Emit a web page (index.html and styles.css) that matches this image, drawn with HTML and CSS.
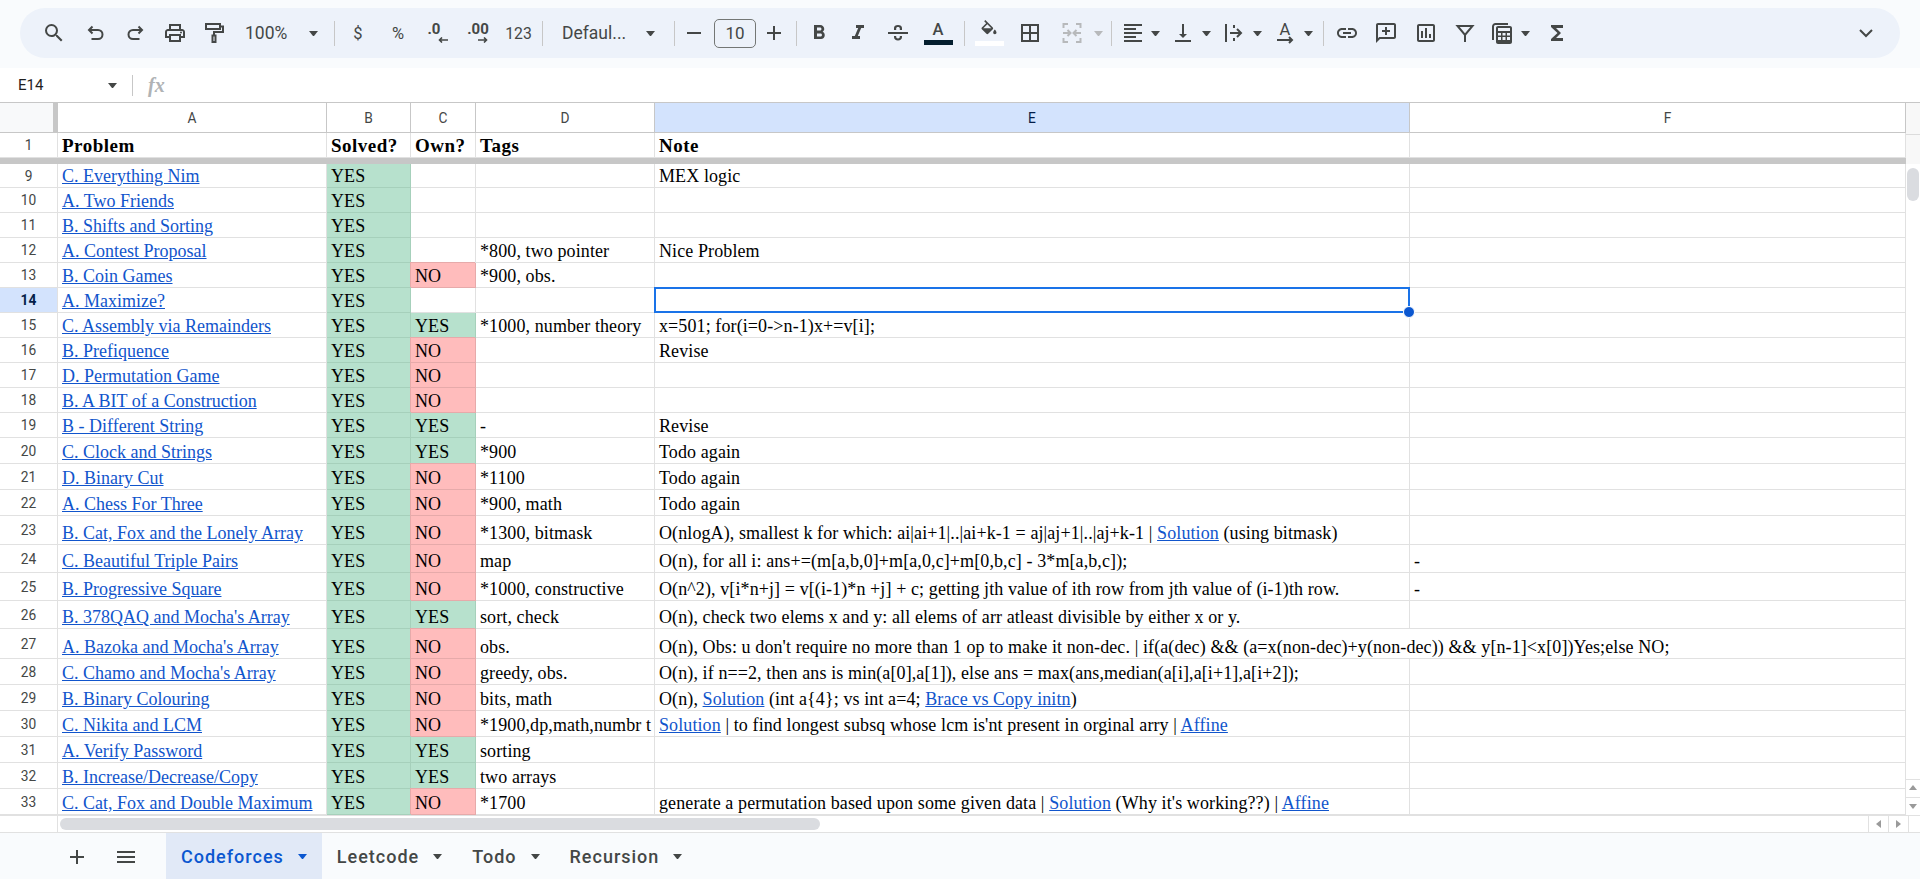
FILE: index.html
```html
<!DOCTYPE html>
<html lang="en">
<head>
  <meta charset="UTF-8" />
  <meta name="viewport" content="width=device-width, initial-scale=1.0" />
  <title>Codeforces - Sheets</title>
  <link rel="stylesheet" href="styles.css">
</head>
<body>
  <div class="toolbar">
    <div class="pill">
      <span class="tb w40"><svg viewBox="0 0 24 24"><path d="M15.5 14h-.79l-.28-.27A6.47 6.47 0 0 0 16 9.5 6.5 6.5 0 1 0 9.5 16c1.61 0 3.09-.59 4.23-1.57l.27.28v.79l5 4.99L20.49 19l-4.99-5zm-6 0C7.01 14 5 11.99 5 9.5S7.01 5 9.5 5 14 7.01 14 9.5 11.99 14 9.5 14z"/></svg></span>
      <span class="tb w40 ml2"><svg viewBox="0 0 24 24" class="line"><path d="M8.5 5.5L5 9l3.5 3.5M5.5 9h8.5a4.5 4.5 0 0 1 0 9H7.500"/></svg></span>
      <span class="tb w38"><svg viewBox="0 0 24 24" class="line"><path d="M15.5 5.5L19 9l-3.5 3.5M18.5 9H10a4.5 4.5 0 0 0 0 9h6.500"/></svg></span>
      <span class="tb w42"><svg viewBox="0 0 24 24"><path d="M19 8h-1V3H6v5H5c-1.66 0-3 1.34-3 3v6h4v4h12v-4h4v-6c0-1.66-1.34-3-3-3zM8 5h8v3H8V5zm8 12v2H8v-4h8v2zm2-2v-2H6v2H4v-4c0-.55.45-1 1-1h14c.55 0 1 .45 1 1v4h-2z"/><circle cx="18" cy="11.5" r="1"/></svg></span>
      <span class="tb w36"><svg viewBox="0 0 24 24" class="line"><path d="M4 3h14v5H4zM18 5.500h3v5.500h-9v3"/><path d="M10.500 14.500h3V21h-3z"/></svg></span>
      <span class="zoom">100%<i class="tri"></i></span>
      <b class="sep"></b>
      <span class="tb w40 sym">$</span>
      <span class="tb w40 sym">%</span>
      <span class="tb w40 deci"><em class="one">.0</em><svg viewBox="0 0 10 6" class="line tiny"><path d="M10 3H1.500M4 .5L1.500 3 4 5.500"/></svg></span>
      <span class="tb w40 deci"><em>.00</em><svg viewBox="0 0 10 6" class="line tiny"><path d="M0 3h8.500M6 .5L8.500 3 6 5.500"/></svg></span>
      <span class="tb w41 num">123</span>
      <b class="sep"></b>
      <span class="font">Defaul...<i class="tri"></i></span>
      <b class="sep"></b>
      <span class="tb w32"><svg viewBox="0 0 24 24"><path d="M5 11h14v2H5z"/></svg></span>
      <span class="size">10</span>
      <span class="tb w36 mr1"><svg viewBox="0 0 24 24"><path d="M19 13h-6v6h-2v-6H5v-2h6V5h2v6h6z"/></svg></span>
      <b class="sep"></b>
      <span class="tb w38"><svg viewBox="0 0 24 24"><path d="M15.6 10.79c.97-.67 1.65-1.77 1.65-2.79 0-2.26-1.75-4-4-4H7v14h7.04c2.09 0 3.71-1.7 3.71-3.79 0-1.52-.86-2.82-2.15-3.42zM10 6.5h3c.83 0 1.5.67 1.5 1.5s-.67 1.5-1.5 1.5h-3v-3zm3.5 9H10v-3h3.5c.83 0 1.5.67 1.5 1.5s-.67 1.5-1.5 1.5z"/></svg></span>
      <span class="tb w40"><svg viewBox="0 0 24 24"><path d="M10 4v3h2.21l-3.42 8H6v3h8v-3h-2.21l3.42-8H18V4z"/></svg></span>
      <span class="tb w40"><svg viewBox="0 0 24 24"><path d="M2 11h20v2H2zM12 4c-2.5 0-4 1.3-4 3v2h2.2V7.4c0-.8.7-1.4 1.8-1.4s1.8.6 1.8 1.4V9H16V7c0-1.7-1.5-3-4-3zM8 15v1c0 2 1.6 3.5 4 3.5s4-1.5 4-3.5v-1h-2.2v.8c0 .9-.7 1.6-1.8 1.6s-1.8-.7-1.8-1.6V15z"/></svg></span>
      <span class="tb w40 swatch"><em>A</em><u class="dark"></u></span>
      <span class="mr3"></span>
      <b class="sep"></b>
      <span class="tb w42 swatch"><svg viewBox="0 0 24 24" class="fill"><path fill-rule="evenodd" d="M16.56 8.94L7.62 0 6.21 1.41l2.38 2.38-5.15 5.15c-.59.59-.59 1.54 0 2.12l5.5 5.5c.29.29.68.44 1.06.44s.77-.15 1.06-.44l5.5-5.5c.59-.58.59-1.53 0-2.12zM5.21 10L10 5.21 14.79 10H5.21zM19 11.5s-2 2.17-2 3.5c0 1.1.9 2 2 2s2-.9 2-2c0-1.33-2-3.5-2-3.5z"/></svg><u class="light"></u></span>
      <span class="tb w40"><svg viewBox="0 0 24 24"><path d="M3 3v18h18V3H3zm8 16H5v-6h6v6zm0-8H5V5h6v6zm8 8h-6v-6h6v6zm0-8h-6V5h6v6z"/></svg></span>
      <span class="tb w44 off"><svg viewBox="0 0 24 24" class="line"><path d="M8 3H3.500v4M3.500 17v4H8M16 3h4.500v4M20.500 17v4H16M3 12h7M7.500 9l3 3-3 3M21 12h-7M16.500 9l-3 3 3 3"/></svg></span>
      <i class="tri off-tri mr5"></i>
      <b class="sep"></b>
      <span class="tb w36"><svg viewBox="0 0 24 24"><path d="M3 3h18v2H3zM3 7h12v2H3zM3 11h18v2H3zM3 15h12v2H3zM3 19h18v2H3z"/></svg></span>
      <i class="tri"></i>
      <span class="tb w38 ml4"><svg viewBox="0 0 24 24"><path d="M16 13h-3V3h-2v10H8l4 4 4-4zM4 19v2h16v-2H4z"/></svg></span>
      <i class="tri"></i>
      <span class="tb w38 ml4"><svg viewBox="0 0 24 24" class="line"><path d="M4 3v18M12 4v3M12 17v3M8 12h11M15 8l4 4-4 4"/></svg></span>
      <i class="tri"></i>
      <span class="tb w38 ml4 rotate"><em>A</em><svg viewBox="0 0 18 8" class="line arrow"><path d="M1 4h15M13 1l3 3-3 3"/></svg></span>
      <i class="tri mr7"></i>
      <b class="sep"></b>
      <span class="tb w40"><svg viewBox="0 0 24 24"><path d="M3.9 12c0-1.71 1.39-3.1 3.1-3.1h4V7H7c-2.76 0-5 2.24-5 5s2.24 5 5 5h4v-1.9H7c-1.71 0-3.1-1.39-3.1-3.1zM8 13h8v-2H8v2zm9-6h-4v1.9h4c1.71 0 3.1 1.39 3.1 3.1s-1.39 3.1-3.1 3.1h-4V17h4c2.76 0 5-2.24 5-5s-2.24-5-5-5z"/></svg></span>
      <span class="tb w38"><svg viewBox="0 0 24 24"><path d="M20 2H4c-1.1 0-2 .9-2 2v18l4-4h14c1.1 0 2-.9 2-2V4c0-1.1-.9-2-2-2zm0 14H5.17L4 17.17V4h16v12z"/><path d="M11 6h2v3h3v2h-3v3h-2v-3H8V9h3z"/></svg></span>
      <span class="tb w42"><svg viewBox="0 0 24 24"><path d="M19 3H5c-1.1 0-2 .9-2 2v14c0 1.1.9 2 2 2h14c1.1 0 2-.9 2-2V5c0-1.1-.9-2-2-2zm0 16H5V5h14v14z"/><path d="M7 10h2v7H7zM11 7h2v10h-2zM15 13h2v4h-2z"/></svg></span>
      <span class="tb w36"><svg viewBox="0 0 24 24" class="line"><path d="M4.500 5h15L12 14zM12 14v7"/></svg></span>
      <span class="tb w38"><svg viewBox="0 0 24 24"><path d="M2 5.500C2 3.600 3.600 2 5.500 2H18v2H5.500C4.700 4 4 4.700 4 5.500V19H2z"/><path d="M8 5h12c1.100 0 2 .9 2 2v14c0 1.100-.9 2-2 2H8c-1.100 0-2-.9-2-2V7c0-1.100.9-2 2-2zm0 2v3h12V7zm0 5v2.500h3V12zm4.500 0v2.500h3V12zm4.500 0v2.500h3V12zm-9 4v3h3v-3zm4.500 0v3h3v-3zm4.500 0v3h3v-3z" fill-rule="evenodd"/></svg></span>
      <i class="tri"></i>
      <span class="tb w54"><svg viewBox="0 0 24 24"><path d="M18 4H6v2l6.500 6L6 18v2h12v-3h-7l5-5-5-5h7z"/></svg></span>
      <span class="tb w40 chevron"><svg viewBox="0 0 24 24" class="line"><path d="M6 9l6 6 6-6"/></svg></span>
    </div>
  </div>

  <div class="formula">
    <span class="cellname">E14</span>
    <i class="tri"></i>
    <b class="fsep"></b>
    <span class="fx">fx</span>
  </div>

  <div class="main">
    <table class="sheet">
      <colgroup>
        <col class="c0"><col class="ca"><col class="cb"><col class="cc"><col class="cd"><col class="ce"><col class="cf">
      </colgroup>
      <tr class="head">
        <th class="corner"></th><th>A</th><th>B</th><th>C</th><th>D</th><th class="active">E</th><th class="last">F</th>
      </tr>
      <tr class="h25 top">
        <td class="n">1</td><td>Problem</td><td>Solved?</td><td>Own?</td><td>Tags</td><td>Note</td><td></td>
      </tr>
      <tr class="freeze"><td colspan="7"></td></tr>
      <tr class="h24"><td class="n">9</td><td><a href="#">C. Everything Nim</a></td><td class="yes">YES</td><td></td><td></td><td>MEX logic</td><td></td></tr>
      <tr class="h25"><td class="n">10</td><td><a href="#">A. Two Friends</a></td><td class="yes">YES</td><td></td><td></td><td></td><td></td></tr>
      <tr class="h25"><td class="n">11</td><td><a href="#">B. Shifts and Sorting</a></td><td class="yes">YES</td><td></td><td></td><td></td><td></td></tr>
      <tr class="h25"><td class="n">12</td><td><a href="#">A. Contest Proposal</a></td><td class="yes">YES</td><td></td><td>*800, two pointer</td><td>Nice Problem</td><td></td></tr>
      <tr class="h25"><td class="n">13</td><td><a href="#">B. Coin Games</a></td><td class="yes">YES</td><td class="no">NO</td><td>*900, obs.</td><td></td><td></td></tr>
      <tr class="h25"><td class="n active">14</td><td><a href="#">A. Maximize?</a></td><td class="yes">YES</td><td></td><td></td><td class="selected"><div class="sel"><span class="handle"></span></div></td><td></td></tr>
      <tr class="h25"><td class="n">15</td><td><a href="#">C. Assembly via Remainders</a></td><td class="yes">YES</td><td class="yes">YES</td><td>*1000, number theory</td><td>x=501; for(i=0-&gt;n-1)x+=v[i];</td><td></td></tr>
      <tr class="h25"><td class="n">16</td><td><a href="#">B. Prefiquence</a></td><td class="yes">YES</td><td class="no">NO</td><td></td><td>Revise</td><td></td></tr>
      <tr class="h25"><td class="n">17</td><td><a href="#">D. Permutation Game</a></td><td class="yes">YES</td><td class="no">NO</td><td></td><td></td><td></td></tr>
      <tr class="h25"><td class="n">18</td><td><a href="#">B. A BIT of a Construction</a></td><td class="yes">YES</td><td class="no">NO</td><td></td><td></td><td></td></tr>
      <tr class="h25"><td class="n">19</td><td><a href="#">B - Different String</a></td><td class="yes">YES</td><td class="yes">YES</td><td>-</td><td>Revise</td><td></td></tr>
      <tr class="h26"><td class="n">20</td><td><a href="#">C. Clock and Strings</a></td><td class="yes">YES</td><td class="yes">YES</td><td>*900</td><td>Todo again</td><td></td></tr>
      <tr class="h26"><td class="n">21</td><td><a href="#">D. Binary Cut</a></td><td class="yes">YES</td><td class="no">NO</td><td>*1100</td><td>Todo again</td><td></td></tr>
      <tr class="h26"><td class="n">22</td><td><a href="#">A. Chess For Three</a></td><td class="yes">YES</td><td class="no">NO</td><td>*900, math</td><td>Todo again</td><td></td></tr>
      <tr class="h29"><td class="n">23</td><td><a href="#">B. Cat, Fox and the Lonely Array</a></td><td class="yes">YES</td><td class="no">NO</td><td>*1300, bitmask</td><td>O(nlogA), smallest k for which: ai|ai+1|..|ai+k-1 = aj|aj+1|..|aj+k-1 | <a href="#">Solution</a> (using bitmask)</td><td></td></tr>
      <tr class="h28"><td class="n">24</td><td><a href="#">C. Beautiful Triple Pairs</a></td><td class="yes">YES</td><td class="no">NO</td><td>map</td><td>O(n), for all i: ans+=(m[a,b,0]+m[a,0,c]+m[0,b,c] - 3*m[a,b,c]);</td><td>-</td></tr>
      <tr class="h28"><td class="n">25</td><td><a href="#">B. Progressive Square</a></td><td class="yes">YES</td><td class="no">NO</td><td>*1000, constructive</td><td>O(n^2), v[i*n+j] = v[(i-1)*n +j] + c; getting jth value of ith row from jth value of (i-1)th row.</td><td>-</td></tr>
      <tr class="h28"><td class="n">26</td><td><a href="#">B. 378QAQ and Mocha's Array</a></td><td class="yes">YES</td><td class="yes">YES</td><td>sort, check</td><td>O(n), check two elems x and y: all elems of arr atleast divisible by either x or y.</td><td></td></tr>
      <tr class="h30"><td class="n">27</td><td><a href="#">A. Bazoka and Mocha's Array</a></td><td class="yes">YES</td><td class="no">NO</td><td>obs.</td><td colspan="2">O(n), Obs: u don't require no more than 1 op to make it non-dec. | if(a(dec) &amp;&amp; (a=x(non-dec)+y(non-dec)) &amp;&amp; y[n-1]&lt;x[0])Yes;else NO;</td></tr>
      <tr class="h26"><td class="n">28</td><td><a href="#">C. Chamo and Mocha's Array</a></td><td class="yes">YES</td><td class="no">NO</td><td>greedy, obs.</td><td>O(n), if n==2, then ans is min(a[0],a[1]), else ans = max(ans,median(a[i],a[i+1],a[i+2]);</td><td></td></tr>
      <tr class="h26"><td class="n">29</td><td><a href="#">B. Binary Colouring</a></td><td class="yes">YES</td><td class="no">NO</td><td>bits, math</td><td>O(n), <a href="#">Solution</a> (int a{4}; vs int a=4; <a href="#">Brace vs Copy initn</a>)</td><td></td></tr>
      <tr class="h26"><td class="n">30</td><td><a href="#">C. Nikita and LCM</a></td><td class="yes">YES</td><td class="no">NO</td><td>*1900,dp,math,numbr t</td><td><a href="#">Solution</a> | to find longest subsq whose lcm is'nt present in orginal arry | <a href="#">Affine</a></td><td></td></tr>
      <tr class="h26"><td class="n">31</td><td><a href="#">A. Verify Password</a></td><td class="yes">YES</td><td class="yes">YES</td><td>sorting</td><td></td><td></td></tr>
      <tr class="h26"><td class="n">32</td><td><a href="#">B. Increase/Decrease/Copy</a></td><td class="yes">YES</td><td class="yes">YES</td><td>two arrays</td><td></td><td></td></tr>
      <tr class="h26"><td class="n">33</td><td><a href="#">C. Cat, Fox and Double Maximum</a></td><td class="yes">YES</td><td class="no">NO</td><td>*1700</td><td>generate a permutation based upon some given data | <a href="#">Solution</a> (Why it's working??) | <a href="#">Affine</a></td><td></td></tr>
    </table>
    <div class="vscroll">
      <div class="vtop"></div>
      <div class="vthumb"></div>
      <div class="vbtn"><i class="up"></i></div>
      <div class="vbtn"><i class="down"></i></div>
    </div>
  </div>

  <div class="hscroll">
    <div class="hleft"></div>
    <div class="hthumb"></div>
    <div class="hbtn"><i class="left"></i></div>
    <div class="hbtn"><i class="right"></i></div>
    <div class="hend"></div>
  </div>

  <div class="tabs">
    <span class="tabicon"><svg viewBox="0 0 24 24"><path d="M19 13h-6v6h-2v-6H5v-2h6V5h2v6h6z"/></svg></span>
    <span class="tabicon"><svg viewBox="0 0 24 24"><path d="M3 18h18v-2H3v2zm0-5h18v-2H3v2zm0-7v2h18V6H3z"/></svg></span>
    <span class="tab current">Codeforces<i class="tri"></i></span>
    <span class="tab">Leetcode<i class="tri"></i></span>
    <span class="tab">Todo<i class="tri"></i></span>
    <span class="tab">Recursion<i class="tri"></i></span>
  </div>
</body>
</html>
```

FILE: styles.css
```css
* { box-sizing: border-box; }

body {
  margin: 0;
  height: 879px;
  overflow: hidden;
  background: #fff;
  font-family: Roboto, sans-serif;
  color: #444746;
}

/* toolbar */
.toolbar {
  height: 68px;
  padding: 8px 20px 10px;
  background: #f9fbfd;
}

.pill {
  display: flex;
  align-items: center;
  height: 50px;
  padding: 0 14px;
  background: #edf2fa;
  border-radius: 25px;
}

.tb {
  display: flex;
  flex: none;
  align-items: center;
  justify-content: center;
  height: 40px;
}

.tb svg { width: 24px; height: 24px; fill: #444746; }
.tb svg.line { fill: none; stroke: #444746; stroke-width: 2; }

.w32 { width: 32px; }
.w36 { width: 36px; }
.w38 { width: 38px; }
.w40 { width: 40px; }
.w41 { width: 41px; }
.w42 { width: 42px; }
.w44 { width: 44px; }
.w54 { width: 54px; }
.ml2 { margin-left: 2px; }
.ml4 { margin-left: 4px; }
.mr1 { margin-right: 1px; }
.mr3 { margin-right: 3px; }
.mr5 { margin-right: 5px; }
.mr7 { margin-right: 7px; }

.sep {
  flex: none;
  width: 1px;
  height: 25px;
  margin: 0 3px;
  background: #c7c7c7;
}

.tri {
  display: block;
  flex: none;
  width: 9px;
  height: 5px;
  border-style: solid;
  border-width: 5px 4.5px 0;
  border-color: #444746 transparent transparent;
}

.zoom, .font {
  display: flex;
  flex: none;
  align-items: center;
  justify-content: space-between;
  font-size: 17.5px;
}

.zoom { width: 99px; padding: 0 13px; }
.font { width: 125px; padding: 0 16px; }

.sym { font-size: 16.5px; }
.num { font-size: 15.75px; }

.deci { flex-direction: column; gap: 2px; }
.deci em {
  font-style: normal;
  font-weight: 700;
  font-size: 15px;
  line-height: 11px;
}
.deci em.one { margin-left: -8px; }
.tb .deci svg, .deci svg.line { width: 10px; height: 6px; margin-left: 10px; stroke-width: 1.6; }

.size {
  display: block;
  flex: none;
  width: 42px;
  height: 29px;
  margin-left: 4px;
  border: 1px solid #747775;
  border-radius: 5px;
  font-size: 17px;
  line-height: 27px;
  text-align: center;
}

.swatch { flex-direction: column; }
.swatch em {
  font-style: normal;
  font-size: 16.5px;
  font-weight: 500;
  line-height: 16px;
}
.swatch u { display: block; width: 29px; height: 5px; margin-top: 2px; }
.swatch .dark { background: #041e2e; }
.swatch .light { background: #fff; margin-top: 1px; }
.tb svg.fill { width: 20px; height: 20px; }

.off svg.line { stroke: #b7b9bb; }
.off-tri { border-top-color: #b7b9bb; }

.rotate { flex-direction: column; }
.rotate em {
  font-style: normal;
  font-size: 16.5px;
  line-height: 15px;
}
.tb svg.arrow { width: 18px; height: 8px; margin-top: -1px; }

.chevron { margin-left: auto; }

/* formula bar */
.formula {
  display: flex;
  align-items: center;
  height: 34px;
  padding-left: 18px;
  color: #1f1f1f;
  background: #fff;
}

.cellname { width: 90px; font-size: 15px; }

.fsep {
  width: 1px;
  height: 21px;
  margin-left: 15px;
  background: #c7c7c7;
}

.fx {
  margin-left: 15px;
  font-family: "Liberation Serif", serif;
  font-size: 20px;
  font-style: italic;
  font-weight: 700;
  color: #b0b3b5;
}

/* grid */
.main {
  display: flex;
  height: 713px;
  border-top: 1px solid #c7c7c7;
}

.sheet {
  flex: none;
  width: 1906px;
  border-collapse: separate;
  border-spacing: 0;
  table-layout: fixed;
  font-family: "Liberation Serif", serif;
  font-size: 18px;
  line-height: 20px;
  letter-spacing: 0.1px;
  color: #000;
}

.c0 { width: 58px; }
.ca { width: 269px; }
.cb { width: 84px; }
.cc { width: 65px; }
.cd { width: 179px; }
.ce { width: 755px; }
.cf { width: 496px; }

th, td {
  padding: 0 0 1px 4px;
  border-right: 1px solid #e1e1e1;
  border-bottom: 1px solid #e1e1e1;
  overflow: hidden;
  white-space: nowrap;
  vertical-align: bottom;
}

td:nth-child(2) { letter-spacing: 0; }

.head th {
  height: 30px;
  padding: 0;
  border-right-color: #c7c7c7;
  border-bottom-color: #c7c7c7;
  font-family: Roboto, sans-serif;
  font-size: 13.75px;
  font-weight: 400;
  color: #444746;
  text-align: center;
  vertical-align: middle;
}

.head th.last { padding-left: 20px; }

.head .corner {
  background: #f8f9fa;
  border-right: 5px solid #c7c7c7;
}

.head .active { background: #d3e3fd; color: #041e49; }

.top td, .top td:nth-child(2) { font-size: 19px; font-weight: 700; letter-spacing: 0.5px; }

.freeze td {
  height: 6px;
  padding: 0;
  background: #c7c7c7;
  border: 0;
}

.h24 td { height: 24px; }
.h25 td { height: 25px; }
.h26 td { height: 26px; }
.h28 td { height: 28px; }
.h29 td { height: 29px; }
.h30 td { height: 30px; }

td.n, .top td.n {
  padding: 0;
  font-family: Roboto, sans-serif;
  font-size: 13.75px;
  font-weight: 400;
  letter-spacing: 0;
  color: #444746;
  text-align: center;
  vertical-align: middle;
}

td.n.active { background: #d3e3fd; font-weight: 700; color: #041e49; }

a { color: #1155cc; }

.yes { background: #b7e1cd; border-color: #a6d0bb; }
.no {
  background: #ffbcbc;
  border-color: #e6aaaa;
  box-shadow: -1px -1px 0 #e6aaaa;
}

.selected { position: relative; overflow: visible; }

.sel {
  position: absolute;
  inset: -1px;
  border: 2px solid #1a73e8;
}

.handle {
  position: absolute;
  right: -7px;
  bottom: -7px;
  width: 12px;
  height: 12px;
  background: #0b57d0;
  border: 1px solid #fff;
  border-radius: 50%;
}

/* scrollbars */
.vscroll {
  display: flex;
  flex: none;
  flex-direction: column;
  width: 14px;
  background: #fff;
}

.vtop {
  height: 61px;
  background: #f8f8f8;
}

.vtop::before {
  content: "";
  display: block;
  height: 31px;
  border-bottom: 1px solid #dcdcdc;
}

.vthumb {
  width: 12px;
  height: 33px;
  margin: 4px 0 auto 1px;
  background: #dadce0;
  border-radius: 6px;
}

.vbtn {
  display: flex;
  align-items: center;
  justify-content: center;
  height: 18px;
  border-top: 1px solid #e1e1e1;
}

.up, .down, .left, .right {
  display: block;
  width: 0;
  height: 0;
  border-style: solid;
}

.up { margin-bottom: 3px; border-width: 0 4px 5px; border-color: transparent transparent #9a9a9a; }
.down { border-width: 5px 4px 0; border-color: #9a9a9a transparent transparent; }
.left { border-width: 4px 5px 4px 0; border-color: transparent #9a9a9a transparent transparent; }
.right { border-width: 4px 0 4px 5px; border-color: transparent transparent transparent #9a9a9a; }

.hscroll {
  display: flex;
  align-items: center;
  height: 18px;
  border-top: 1px solid #e1e1e1;
  border-bottom: 1px solid #e1e1e1;
}

.hleft { width: 58px; height: 100%; border-right: 1px solid #e1e1e1; }

.hthumb {
  width: 760px;
  height: 12px;
  margin: 0 auto 0 2px;
  background: #dadce0;
  border-radius: 6px;
}

.hbtn {
  display: flex;
  align-items: center;
  justify-content: center;
  width: 20px;
  height: 100%;
  border-left: 1px solid #e1e1e1;
}

.hend { width: 12px; height: 100%; border-left: 1px solid #e1e1e1; }

/* sheet tabs */
.tabs {
  display: flex;
  height: 47px;
  padding-left: 57px;
  background: #f9fbfd;
}

.tabicon {
  display: flex;
  align-items: center;
  justify-content: center;
  width: 40px;
  margin-right: 9px;
}

.tabicon svg { width: 24px; height: 24px; fill: #444746; }

.tabicon + .tabicon { margin-right: 20px; }

.tab {
  display: flex;
  align-items: center;
  gap: 14px;
  padding: 0 15px;
  font-size: 18px;
  font-weight: 500;
  letter-spacing: 1px;
  color: #444746;
}

.tab.current {
  background: #e1e9f7;
  color: #0b57d0;
}

.tab.current .tri { border-top-color: #0b57d0; }
```
